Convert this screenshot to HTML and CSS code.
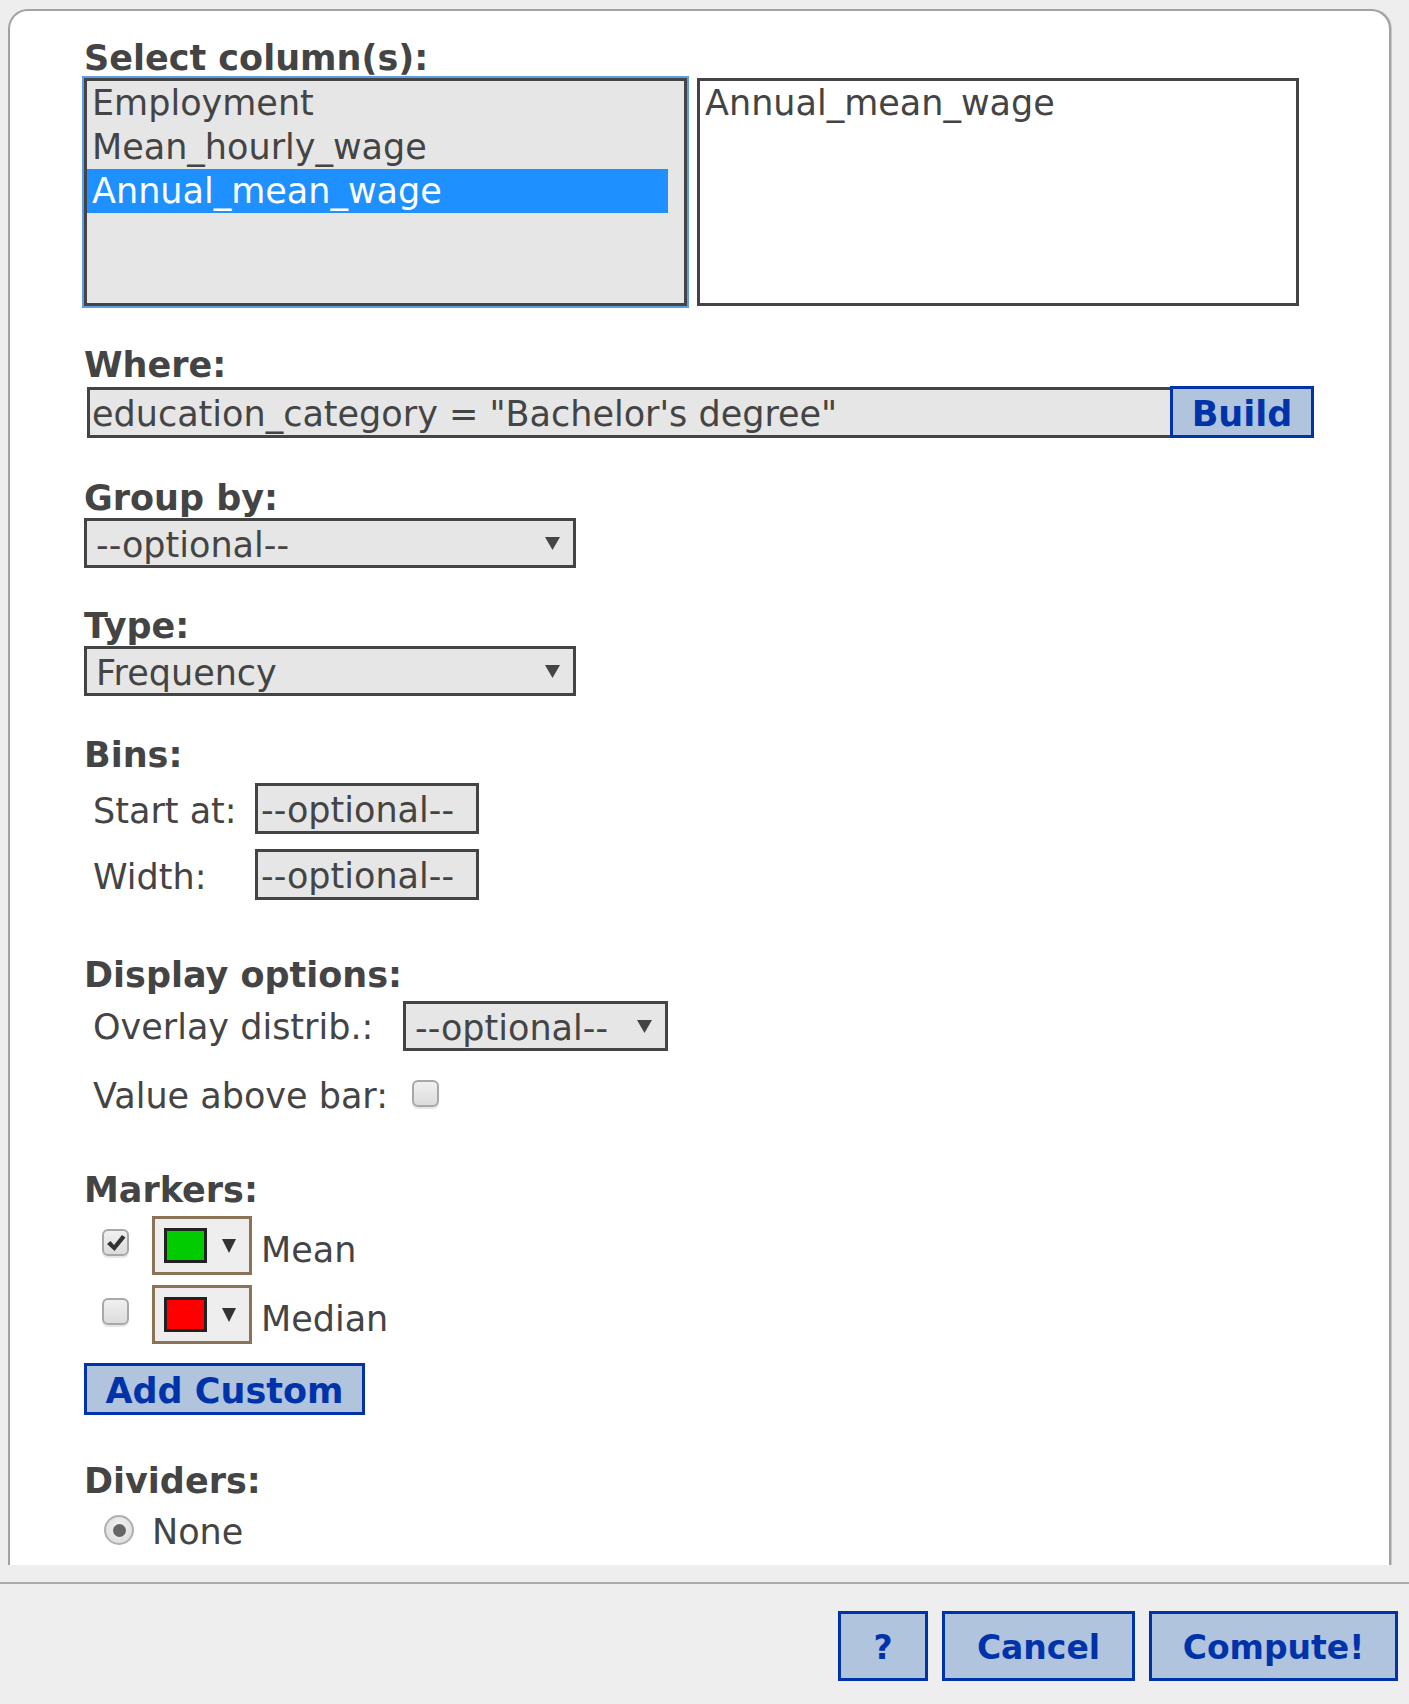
FILE: index.html
```html
<!DOCTYPE html>
<html>
<head>
<meta charset="utf-8">
<link rel="stylesheet" href="styles.css">
</head>
<body>
<div class="viewport">
  <div class="panel">
    <div class="label">Select column(s):</div>
    <div class="pair">
      <div class="listbox">
        <div class="opt">Employment</div>
        <div class="opt">Mean_hourly_wage</div>
        <div class="opt sel">Annual_mean_wage</div>
      </div>
      <div class="chosen">
        <div class="opt">Annual_mean_wage</div>
      </div>
    </div>

    <div class="label l-where">Where:</div>
    <div class="where-row">
      <div class="where-input">education_category = "Bachelor's degree"</div>
      <button class="btn build">Build</button>
    </div>

    <div class="label l-group">Group by:</div>
    <div class="select sel-wide"><span>--optional--</span><svg class="arrow" viewBox="0 0 15 13"><polygon points="0,0 15,0 7.5,13"/></svg></div>

    <div class="label l-type">Type:</div>
    <div class="select sel-wide"><span>Frequency</span><svg class="arrow" viewBox="0 0 15 13"><polygon points="0,0 15,0 7.5,13"/></svg></div>

    <div class="label l-bins">Bins:</div>
    <div class="bins-grid">
      <div class="sublabel">Start at:</div>
      <div class="textinput">--optional--</div>
      <div class="sublabel">Width:</div>
      <div class="textinput">--optional--</div>
    </div>

    <div class="label l-display">Display options:</div>
    <div class="overlay-row">
      <div class="sublabel overlay-label">Overlay distrib.:</div>
      <div class="select sel-overlay"><span>--optional--</span><svg class="arrow" viewBox="0 0 15 13"><polygon points="0,0 15,0 7.5,13"/></svg></div>
    </div>
    <div class="value-row">
      <div class="sublabel value-label">Value above bar:</div>
      <div class="checkbox"></div>
    </div>

    <div class="label l-markers">Markers:</div>
    <div class="marker-row first-marker">
      <div class="checkbox checked"><svg viewBox="0 0 20 18"><path d="M1 10 L4.5 7 L8 11 L16 1 L19.5 3.5 L8.5 17 Z"/></svg></div>
      <div class="picker"><div class="swatch green"></div><svg class="arrow small" viewBox="0 0 14 14"><polygon points="0,0 14,0 7,14"/></svg></div>
      <div class="marker-label">Mean</div>
    </div>
    <div class="marker-row second-marker">
      <div class="checkbox"></div>
      <div class="picker"><div class="swatch red"></div><svg class="arrow small" viewBox="0 0 14 14"><polygon points="0,0 14,0 7,14"/></svg></div>
      <div class="marker-label">Median</div>
    </div>
    <button class="btn add-custom">Add Custom</button>

    <div class="label l-dividers">Dividers:</div>
    <div class="radio-row">
      <div class="radio"><div class="dot"></div></div>
      <div class="radio-label">None</div>
    </div>
  </div>
</div>
<div class="footer">
  <button class="btn fbtn f-help">?</button>
  <button class="btn fbtn f-cancel">Cancel</button>
  <button class="btn fbtn f-compute">Compute!</button>
</div>
</body>
</html>
```

FILE: styles.css
```css
* { box-sizing: border-box; }
html, body { margin: 0; padding: 0; }
body {
  background: #eeeeee;
  font-family: "DejaVu Sans", Verdana, sans-serif;
  font-size: 35px;
  color: #444444;
  width: 1409px;
  height: 1704px;
  overflow: hidden;
}
.viewport {
  height: 1565px;
  overflow: hidden;
  padding: 9px 18px 0 8px;
}
.panel {
  background: #ffffff;
  border: 2px solid #a2a2a2;
  border-bottom: none;
  border-radius: 20px 20px 0 0;
  padding: 27px 0 0 74px;
  min-height: 1700px;
  box-shadow: 1px 0 0 #c8c8c8;
}
.label {
  font-weight: bold;
  line-height: 40px;
  height: 40px;
  white-space: nowrap;
}
.pair { display: flex; gap: 10px; }
.listbox {
  width: 603px;
  height: 228px;
  border: 3px solid #444444;
  outline: 2px solid #5e9ee8;
  background: #e6e6e6;
  padding-right: 16px;
}
.chosen {
  width: 602px;
  height: 228px;
  border: 3px solid #444444;
  background: #ffffff;
}
.opt { line-height: 44px; height: 44px; padding-left: 5px; white-space: nowrap; }
.sel { background: #1e90ff; color: #ffffff; }

.l-where { margin-top: 39px; }
.where-row { display: flex; align-items: flex-end; margin-top: 1px; height: 52px; }
.where-input {
  width: 1083px;
  height: 51px;
  margin-left: 3px;
  border: 3px solid #444444;
  border-right: none;
  background: #e6e6e6;
  line-height: 45px;
  padding: 2px 0 0 2px;
  white-space: nowrap;
}
.btn {
  font-family: "DejaVu Sans", Verdana, sans-serif;
  font-weight: bold;
  font-size: 35px;
  color: #0033aa;
  background: #b0c4de;
  border: 3px solid #0033aa;
  padding: 4px 0 0 0;
  margin: 0;
  line-height: 1;
}
.build { width: 144px; height: 52px; }

.l-group { margin-top: 40px; }
.l-type { margin-top: 38px; }
.select {
  display: flex;
  align-items: center;
  justify-content: space-between;
  height: 50px;
  border: 3px solid #444444;
  background: #e6e6e6;
  padding: 0 13px 0 9px;
  white-space: nowrap;
}
.select span { line-height: 44px; padding-top: 4px; }
.sel-wide { width: 492px; }
.arrow { width: 15px; height: 13px; fill: #444444; flex: none; }
.arrow.small { width: 14px; height: 14px; fill: #333333; }

.l-bins { margin-top: 39px; }
.bins-grid {
  display: grid;
  grid-template-columns: 162px 224px;
  row-gap: 15px;
  align-items: center;
  margin-top: 8px;
  padding-left: 9px;
}
.sublabel { line-height: 40px; white-space: nowrap; }
.bins-grid .sublabel { padding-top: 4px; }
.textinput {
  height: 51px;
  border: 3px solid #444444;
  background: #e6e6e6;
  line-height: 45px;
  padding: 2px 0 0 3px;
  white-space: nowrap;
}

.l-display { margin-top: 55px; }
.overlay-row { display: flex; align-items: center; margin-top: 6px; padding-left: 9px; }
.overlay-label { width: 310px; flex: none; padding-top: 2px; }
.sel-overlay { width: 265px; }
.value-row { display: flex; align-items: center; margin-top: 23px; padding-left: 9px; }
.value-label { width: 319px; flex: none; padding-top: 2px; }

.checkbox {
  width: 27px;
  height: 27px;
  flex: none;
  border: 2px solid #a8a8a8;
  border-radius: 6px;
  background: linear-gradient(#f0f0f0, #dcdcdc);
  box-shadow: 0 2px 1px rgba(0, 0, 0, 0.1);
  display: flex;
  align-items: center;
  justify-content: center;
}
.value-row .checkbox { margin-bottom: 4px; }
.checkbox svg { width: 20px; height: 18px; fill: #333333; }

.l-markers { margin-top: 54px; }
.marker-row { display: flex; align-items: flex-start; height: 59px; }
.first-marker { margin-top: 6px; }
.second-marker { margin-top: 10px; }
.marker-row .checkbox { margin: 13px 0 0 18px; }
.picker {
  width: 100px;
  height: 59px;
  margin-left: 23px;
  border: 3px solid #8b7358;
  background: #eeeeee;
  display: flex;
  align-items: center;
  padding-left: 9px;
  gap: 15px;
}
.swatch { width: 43px; height: 35px; border: 3px solid #222222; }
.green { background: #00cc00; }
.red { background: #ff0000; }
.marker-label { margin: 14px 0 0 9px; line-height: 40px; }

.add-custom { display: block; margin-top: 19px; width: 281px; height: 52px; }

.l-dividers { margin-top: 46px; }
.radio-row { display: flex; align-items: center; margin-top: 11px; height: 40px; }
.radio {
  width: 30px;
  height: 30px;
  margin: 0 18px 4px 20px;
  border: 2px solid #b0b0b0;
  border-radius: 50%;
  background: radial-gradient(circle at 50% 40%, #f4f4f4, #d8d8d8);
  display: flex;
  align-items: center;
  justify-content: center;
}
.dot { width: 13px; height: 13px; border-radius: 50%; background: #666666; }
.radio-label { line-height: 40px; }

.footer {
  margin-top: 17px;
  border-top: 2px solid #aaaaaa;
  height: 122px;
  display: flex;
  justify-content: flex-end;
  align-items: flex-start;
  gap: 14px;
  padding: 27px 11px 0 0;
}
.fbtn { height: 70px; font-size: 33px; padding-top: 2px; }
.f-help { width: 90px; }
.f-cancel { width: 193px; }
.f-compute { width: 249px; }
```
